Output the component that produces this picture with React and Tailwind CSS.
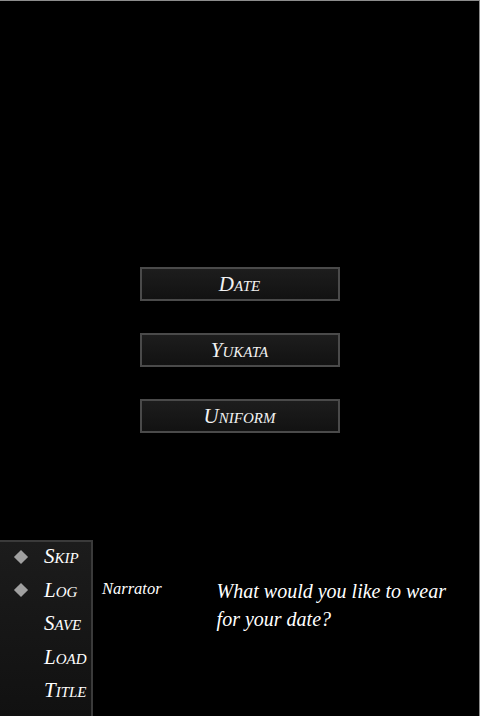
const choices = ['Date', 'Yukata', 'Uniform'];
const menu = [
  { label: 'Skip', mark: true },
  { label: 'Log', mark: true },
  { label: 'Save', mark: false },
  { label: 'Load', mark: false },
  { label: 'Title', mark: false },
];

const serif = "font-['Liberation_Serif','Times_New_Roman',serif]";

function Choice({ label }) {
  return (
    <button className="flex h-[34px] w-[200px] items-center justify-center border-2 border-[#4a4a4a] bg-gradient-to-b from-[#1d1d1d] to-[#121212]">
      <span className={`${serif} text-[21px] italic [font-variant:small-caps] text-[#f2f2f2] leading-none`}>
        {label}
      </span>
    </button>
  );
}

function Diamond() {
  return <span className="block h-[10px] w-[10px] rotate-45 bg-[#a0a0a0]" />;
}

export default function App() {
  return (
    <div className="flex h-[716px] w-[480px] flex-col border-t border-r border-[#8c8c8c] bg-black">
      <div className="flex flex-col items-center gap-[32px] pt-[266px]">
        {choices.map((c) => (
          <Choice key={c} label={c} />
        ))}
      </div>

      <div className="mt-auto flex">
        <div className="h-[176px] w-[93px] border-t-2 border-r-2 border-[#3a3a3a] bg-gradient-to-b from-[#1c1c1c] to-[#111]">
          <div className="-mt-[2px]">
            {menu.map((m) => (
              <div key={m.label} className="flex h-[33.5px] items-center">
                <div className="flex w-[42px] justify-center">{m.mark && <Diamond />}</div>
                <span className={`${serif} pl-[2px] text-[21px] italic [font-variant:small-caps] text-white leading-none`}>
                  {m.label}
                </span>
              </div>
            ))}
          </div>
        </div>
        <div className={`${serif} pl-[9px] pt-[41px] text-[16.5px] italic text-white leading-none`}>Narrator</div>
        <p className={`${serif} ml-[55px] mt-[37px] w-[240px] text-[20px] italic leading-[28px] text-white`}>
          What would you like to wear for your date?
        </p>
      </div>
    </div>
  );
}
